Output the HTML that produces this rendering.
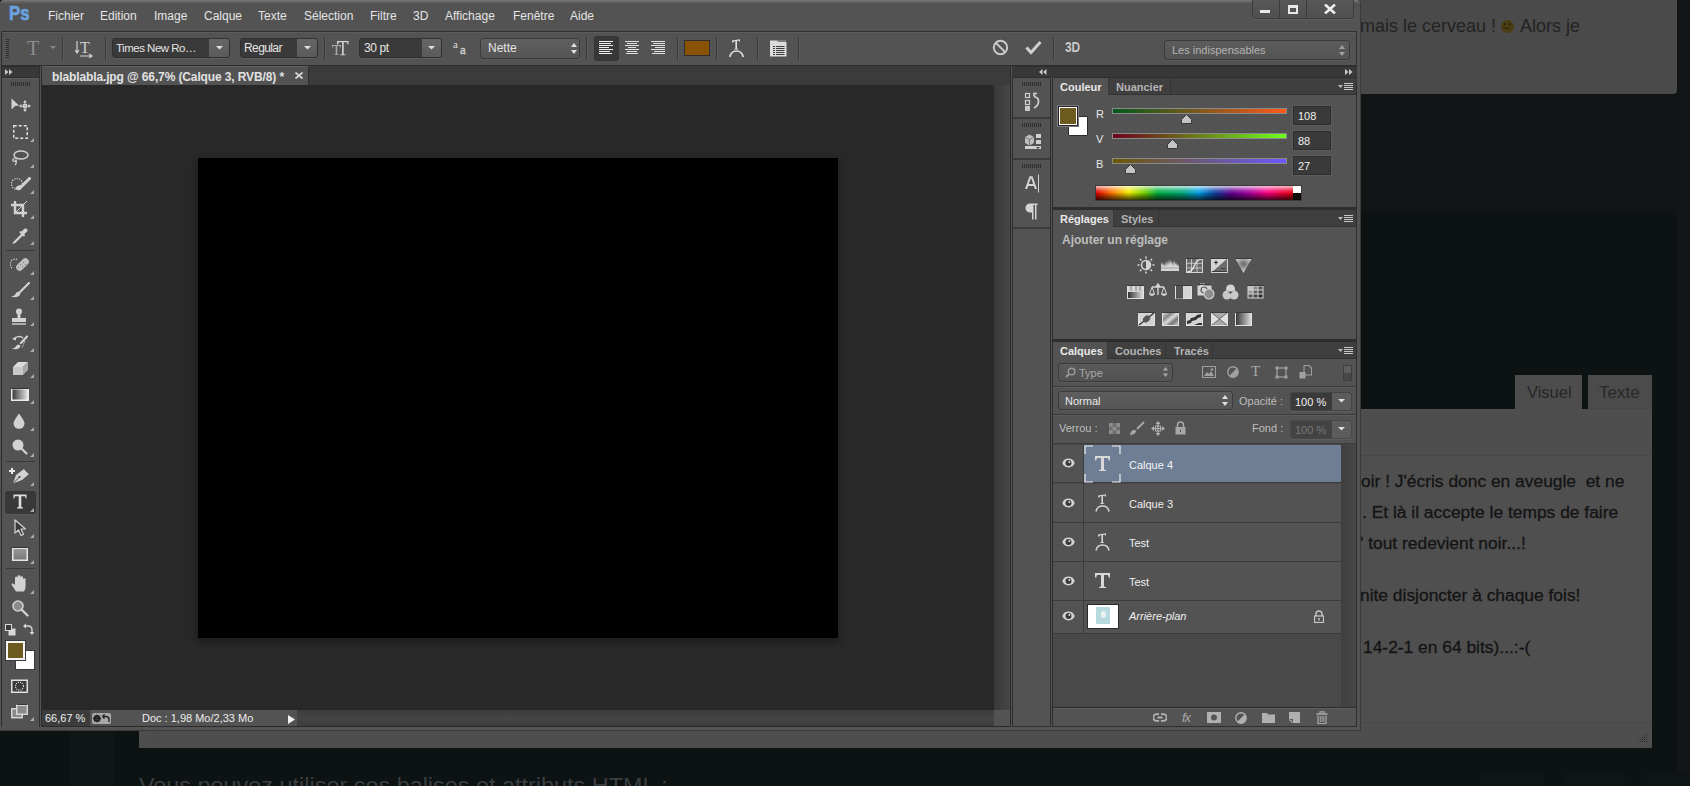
<!DOCTYPE html>
<html><head><meta charset="utf-8">
<style>
*{box-sizing:border-box;margin:0;padding:0}
html,body{width:1690px;height:786px;overflow:hidden;background:#0d1213;font-family:"Liberation Sans",sans-serif;}
.a{position:absolute}
#web{position:absolute;left:0;top:0;width:1690px;height:786px}
#ps{position:absolute;left:0;top:0;width:1361px;height:731px;background:#535353;border-right:1px solid #3a3a3a;border-bottom:1px solid #3a3a3a;border-radius:4px 4px 0 0;overflow:hidden}
.t{position:absolute;white-space:nowrap;color:#e4e4e4;font-size:12px;line-height:14px}
.sep{position:absolute;width:1px;background:#3a3a3a;box-shadow:1px 0 0 #5c5c5c}
.fld{position:absolute;background:#3a3a3a;border:1px solid #303030;border-radius:3px;box-shadow:0 1px 0 #5e5e5e}
.dd{position:absolute;background:linear-gradient(#5f5f5f,#555);border:1px solid #3b3b3b;border-radius:3px;box-shadow:0 1px 0 #5a5a5a}
.tab{position:absolute;font-size:11px;font-weight:bold;color:#b4b4b4;line-height:16px}
</style></head><body>
<div id="web">
  <!-- background columns -->
  <div class="a" style="left:1361px;top:94px;width:316px;height:116px;background:#111516"></div>
    <div class="a" style="left:1677px;top:0;width:13px;height:786px;background:#121617"></div>
  <div class="a" style="left:70px;top:731px;width:44px;height:55px;background:#101516"></div>
  <!-- card -->
  <div class="a" style="left:1200px;top:0;width:477px;height:94px;background:#4a4a4a;border-radius:0 0 4px 0"></div>
  <!-- tabs -->
  <div class="a" style="left:1515px;top:375px;width:67px;height:34px;background:#4d4d4d"></div>
  <div class="a" style="left:1588px;top:375px;width:64px;height:34px;background:#4b4b4b;border-bottom:1px solid #474747"></div>
  <!-- editor -->
  <div class="a" style="left:139px;top:409px;width:1513px;height:339px;background:#4e4e4e"></div>

  <!-- card text -->
  <div class="a" style="left:1360px;top:14px;font-size:18px;line-height:24px;color:#232323;white-space:nowrap">mais le cerveau !</div>
  <div class="a" style="left:1501px;top:20px;width:13px;height:13px;border-radius:50%;background:#4b3c12"></div>
  <div class="a" style="left:1504px;top:23px;width:2px;height:2px;background:#2a2410"></div>
  <div class="a" style="left:1509px;top:23px;width:2px;height:2px;background:#2a2410"></div>
  <div class="a" style="left:1503px;top:25px;width:7px;height:4px;border-bottom:1.5px solid #2a2410;border-radius:0 0 4px 4px"></div>
  <div class="a" style="left:1520px;top:14px;font-size:18px;line-height:24px;color:#232323;white-space:nowrap">Alors je</div>
  <!-- tab labels -->
  <div class="a" style="left:1527px;top:383px;font-size:17px;line-height:20px;color:#272727;white-space:nowrap;transform:scaleX(0.97);transform-origin:0 0">Visuel</div>
  <div class="a" style="left:1599px;top:383px;font-size:17px;line-height:20px;color:#292929;white-space:nowrap">Texte</div>
  <!-- editor structure -->
  <div class="a" style="left:139px;top:455px;width:1513px;height:1px;background:#474747"></div>
  <div class="a" style="left:139px;top:456px;width:1513px;height:266px;background:#4f4f4f"></div>
  <div class="a" style="left:139px;top:722px;width:1513px;height:1px;background:#474747"></div>
  <svg class="a" style="left:1637px;top:732px" width="11" height="11"><path d="M9 1h1v1h-1zM7 3h1v1h-1zM9 3h1v1h-1zM5 5h1v1h-1zM7 5h1v1h-1zM9 5h1v1h-1zM3 7h1v1h-1zM5 7h1v1h-1zM7 7h1v1h-1zM9 7h1v1h-1zM1 9h1v1h-1zM3 9h1v1h-1zM5 9h1v1h-1zM7 9h1v1h-1zM9 9h1v1h-1z" fill="#2e2e2e"/></svg>
  <!-- editor text -->
  <div class="a" style="left:1361px;top:471px;font-size:17.4px;line-height:20px;color:#141414;-webkit-text-stroke:0.3px #141414;white-space:pre">oir ! J'écris donc en aveugle  et ne</div>
  <div class="a" style="left:1362px;top:502px;font-size:17.4px;line-height:20px;color:#141414;-webkit-text-stroke:0.3px #141414;white-space:pre">. Et là il accepte le temps de faire</div>
  <div class="a" style="left:1360px;top:533px;font-size:17.4px;line-height:20px;color:#141414;-webkit-text-stroke:0.3px #141414;white-space:pre">' tout redevient noir...!</div>
  <div class="a" style="left:1360px;top:585px;font-size:17.4px;line-height:20px;color:#141414;-webkit-text-stroke:0.3px #141414;white-space:pre">nite disjoncter à chaque fois!</div>
  <div class="a" style="left:1363px;top:637px;font-size:17.4px;line-height:20px;color:#141414;-webkit-text-stroke:0.3px #141414;white-space:pre">14-2-1 en 64 bits)...:-(</div>
  <!-- bottom -->
  <div class="a" style="left:152px;top:727px;font-size:16px;line-height:18px;color:#4a4a4a">p</div>
  <div class="a" style="left:139px;top:773px;font-size:22px;line-height:26px;color:#3a3f42;white-space:nowrap;transform:scaleX(1.064);transform-origin:0 0">Vous pouvez utiliser ces balises et attributs HTML :</div>
  <div class="a" style="left:1480px;top:773px;width:64px;height:13px;background:#0f1416;border-radius:3px 3px 0 0"></div>
  <div class="a" style="left:1562px;top:773px;width:63px;height:13px;background:#0f1416;border-radius:3px 3px 0 0"></div>
  <div class="a" style="left:1641px;top:773px;width:49px;height:13px;background:#0f1416;border-radius:3px 3px 0 0"></div>
</div>

<div id="ps">

  <!-- top highlight -->
  <div class="a" style="left:0;top:0;width:1361px;height:1px;background:#767676"></div>
  <div class="a" style="left:0;top:1px;width:1361px;height:2px;background:#636363"></div>
  <!-- Ps logo -->
  <div class="t" style="left:9px;top:2px;font-size:21px;line-height:21px;font-weight:bold;color:#6aa2de;-webkit-text-stroke:0.7px #6aa2de;transform:scaleX(0.8);transform-origin:0 0">Ps</div>
  <div class="t" style="left:48px;top:9px">Fichier</div>
  <div class="t" style="left:100px;top:9px">Edition</div>
  <div class="t" style="left:154px;top:9px">Image</div>
  <div class="t" style="left:204px;top:9px">Calque</div>
  <div class="t" style="left:258px;top:9px">Texte</div>
  <div class="t" style="left:304px;top:9px">Sélection</div>
  <div class="t" style="left:370px;top:9px">Filtre</div>
  <div class="t" style="left:413px;top:9px">3D</div>
  <div class="t" style="left:445px;top:9px">Affichage</div>
  <div class="t" style="left:513px;top:9px">Fenêtre</div>
  <div class="t" style="left:570px;top:9px">Aide</div>
  <!-- window buttons -->
  <div class="a" style="left:1252px;top:-3px;width:102px;height:22px;border:1px solid #3c3c3c;border-radius:0 0 4px 4px;background:linear-gradient(#585858,#505050);box-shadow:0 1px 0 #5e5e5e"></div>
  <div class="a" style="left:1279px;top:0;width:1px;height:18px;background:#3c3c3c"></div>
  <div class="a" style="left:1306px;top:0;width:1px;height:18px;background:#3c3c3c"></div>
  <div class="a" style="left:1260px;top:10px;width:10px;height:3px;background:#e8e8e8"></div>
  <div class="a" style="left:1288px;top:5px;width:10px;height:9px;border:2px solid #e8e8e8;border-top-width:3px"></div>
  <svg class="a" style="left:1324px;top:4px" width="12" height="10" viewBox="0 0 12 10"><path d="M1 0.5 L11 9.5 M11 0.5 L1 9.5" stroke="#ececec" stroke-width="2.6"/></svg>
  <!-- options bar -->
  <div class="a" style="left:1px;top:31px;width:1356px;height:35px;background:#535353;border:1px solid #2e2e2e;border-right-color:#333"></div>
  <div class="a" style="left:2px;top:32px;width:1354px;height:1px;background:#5c5c5c"></div>

  <!-- options content -->
  <div class="a" style="left:6px;top:39px;width:3px;height:20px;background:repeating-linear-gradient(#2e2e2e 0 1px,transparent 1px 2px)"></div>
  <div class="t" style="left:27px;top:38px;font-family:'Liberation Serif';font-size:20px;line-height:20px;color:#8e8e8e">T</div>
  <svg class="a" style="left:50px;top:46px" width="6" height="4"><path d="M0 0H6L3 3z" fill="#8a8a8a"/></svg>
  <div class="sep" style="left:62px;top:37px;height:23px"></div>
  <svg class="a" style="left:75px;top:39px" width="19" height="19" viewBox="0 0 19 19"><text x="5" y="14" font-family="Liberation Serif" font-size="16" fill="#d0d0d0">T</text><path d="M2 2V13M0 11L2 14L4 11" stroke="#d0d0d0" stroke-width="1.2" fill="none"/><path d="M5 17H17M14 15L17 17L14 19" stroke="#d0d0d0" stroke-width="1.2" fill="none"/></svg>
  <div class="sep" style="left:105px;top:37px;height:23px"></div>
  <div class="fld" style="left:112px;top:38px;width:118px;height:20px"></div>
  <div class="a" style="left:209px;top:39px;width:20px;height:18px;background:linear-gradient(#666,#5a5a5a);border-radius:0 2px 2px 0"></div>
  <svg class="a" style="left:216px;top:46px" width="7" height="4"><path d="M0 0H7L3.5 3.5z" fill="#e0e0e0"/></svg>
  <div class="t" style="left:116px;top:41px;font-size:11.5px;letter-spacing:-0.5px">Times New Ro…</div>
  <div class="fld" style="left:240px;top:38px;width:78px;height:20px"></div>
  <div class="a" style="left:297px;top:39px;width:20px;height:18px;background:linear-gradient(#666,#5a5a5a);border-radius:0 2px 2px 0"></div>
  <svg class="a" style="left:304px;top:46px" width="7" height="4"><path d="M0 0H7L3.5 3.5z" fill="#e0e0e0"/></svg>
  <div class="t" style="left:244px;top:41px;font-size:12px;letter-spacing:-0.6px">Regular</div>
  <div class="sep" style="left:324px;top:37px;height:23px"></div>
  <svg class="a" style="left:331px;top:40px" width="18" height="16" viewBox="0 0 18 16"><path d="M1 5H10V7.5H9.3L8.8 6H6.3V14.3L7.5 14.6V15H3.5V14.6L4.7 14.3V6H2.2L1.7 7.5H1z" fill="#a8a8a8"/><path d="M6 1H17.5V4.5H16.7L16 2.3H12.7V14.2L14.5 14.6V15.2H9.3V14.6L11.1 14.2V2.3H7.8L7 4.5H6z" fill="#d4d4d4"/></svg>
  <div class="fld" style="left:359px;top:38px;width:83px;height:20px"></div>
  <div class="a" style="left:422px;top:39px;width:19px;height:18px;background:linear-gradient(#666,#5a5a5a);border-radius:0 2px 2px 0"></div>
  <svg class="a" style="left:428px;top:46px" width="7" height="4"><path d="M0 0H7L3.5 3.5z" fill="#e0e0e0"/></svg>
  <div class="t" style="left:364px;top:41px;font-size:12px;letter-spacing:-0.4px">30 pt</div>
  <svg class="a" style="left:453px;top:40px" width="16" height="15" viewBox="0 0 16 15"><text x="0" y="8" font-family="Liberation Serif" font-size="11" fill="#d8d8d8">a</text><text x="7" y="13.5" font-family="Liberation Serif" font-size="13" fill="#d0d0d0" stroke="#d0d0d0" stroke-width="0.4">a</text></svg>
  <div class="dd" style="left:480px;top:38px;width:100px;height:21px"></div>
  <div class="t" style="left:488px;top:41px;font-size:12px">Nette</div>
  <svg class="a" style="left:571px;top:43px" width="6" height="11"><path d="M0 4L3 0L6 4zM0 7H6L3 11z" fill="#e0e0e0"/></svg>
  <div class="sep" style="left:586px;top:37px;height:23px"></div>
  <div class="a" style="left:594px;top:36px;width:25px;height:25px;background:#383838;border-radius:3px;border:1px solid #343434"></div>
  <svg class="a" style="left:598px;top:40px" width="16" height="15"><path d="M1 1.5H15M1 3.5H13M1 5.5H15M1 7.5H11M1 9.5H15M1 11.5H12M1 13.5H14" stroke="#f0f0f0" stroke-width="1"/></svg>
  <svg class="a" style="left:624px;top:40px" width="16" height="15"><path d="M1 1.5H15M3 3.5H13M1 5.5H15M4 7.5H12M1 9.5H15M3 11.5H13M2 13.5H14" stroke="#e0e0e0" stroke-width="1"/></svg>
  <svg class="a" style="left:650px;top:40px" width="16" height="15"><path d="M1 1.5H15M3 3.5H15M1 5.5H15M5 7.5H15M1 9.5H15M4 11.5H15M2 13.5H15" stroke="#e0e0e0" stroke-width="1"/></svg>
  <div class="sep" style="left:677px;top:37px;height:23px"></div>
  <div class="a" style="left:684px;top:40px;width:26px;height:16px;background:#8a5200;border:1px solid #2f2f2f"></div>
  <div class="sep" style="left:716px;top:37px;height:23px"></div>
  <svg class="a" style="left:729px;top:38px" width="15" height="20" viewBox="0 0 15 20"><path d="M3 2.5L11 1.2V3.5H10L9.6 2.6L8 2.9V10.5L9.2 11V11.6H5.2V11L6.4 10.4V3.1L4.8 3.4L4.2 4.6H3z" fill="#e0e0e0"/><path d="M0.8 19Q2 13 7.5 13Q13 13 14.2 19" stroke="#e0e0e0" stroke-width="1.7" fill="none"/></svg>
  <div class="sep" style="left:757px;top:37px;height:23px"></div>
  <svg class="a" style="left:770px;top:40px" width="17" height="17" viewBox="0 0 17 17"><path d="M0 0.5H7L8.5 2H16.5V16.5H0z" fill="#dcdcdc"/><path d="M7.5 1H16" stroke="#9a9a9a" stroke-width="1.2"/><path d="M3 6.5H14.5M3 8.5H14.5M3 10.5H14.5M3 12.5H14.5M3 14.5H14.5" stroke="#3c3c3c" stroke-width="1"/><path d="M5.5 6V15" stroke="#dcdcdc" stroke-width="1"/></svg>
  <div class="sep" style="left:798px;top:37px;height:23px"></div>

  <!-- ===== LEFT TOOLS PANEL ===== -->
  <div class="a" style="left:1px;top:66px;width:39px;height:661px;background:#535353;border:1px solid #2e2e2e;border-bottom:0"></div>
  <div class="a" style="left:2px;top:67px;width:37px;height:10px;background:#383838"></div>
  <div class="a" style="left:2px;top:77px;width:37px;height:1px;background:#2e2e2e"></div>
  <div class="a" style="left:2px;top:78px;width:37px;height:1px;background:#5e5e5e"></div>
  <svg class="a" style="left:5px;top:69px" width="8" height="6"><path d="M0 0L3.5 3L0 6zM4 0L7.5 3L4 6z" fill="#c8c8c8"/></svg>
  <div class="a" style="left:11px;top:82px;width:19px;height:4px;background:repeating-linear-gradient(90deg,#2f2f2f 0 1px,transparent 1px 2px)"></div>
  <svg class="a" style="left:11px;top:98px" width="20" height="15" viewBox="0 0 20 15"><path d="M0.5 0.5L8 7.5L4 8L0.5 11.5z" fill="#d2d2d2"/><path d="M14 3V13M9 8H19" stroke="#d2d2d2" stroke-width="1.2"/><path d="M14 2L12 4.5H16zM14 14L12 11.5H16zM8 8L10.5 6V10zM20 8L17.5 6V10z" fill="#d2d2d2"/><rect x="12.5" y="6.5" width="3" height="3" fill="none" stroke="#d2d2d2"/></svg>
  <svg class="a" style="left:13px;top:125px" width="15" height="14" viewBox="0 0 15 14"><rect x="0.75" y="0.75" width="13.5" height="12.5" fill="none" stroke="#e0e0e0" stroke-width="1.5" stroke-dasharray="3 2"/></svg>
  <svg class="a" style="left:30px;top:138px" width="4" height="4"><path d="M4 0V4H0z" fill="#aaa"/></svg>
  <svg class="a" style="left:11px;top:150px" width="18" height="16" viewBox="0 0 18 16"><ellipse cx="10" cy="5" rx="7" ry="4" fill="none" stroke="#d2d2d2" stroke-width="1.5"/><path d="M4 8Q1 9 2 11Q4 12 5 10Q6 13 4 15" stroke="#d2d2d2" stroke-width="1.3" fill="none"/></svg>
  <svg class="a" style="left:30px;top:164px" width="4" height="4"><path d="M4 0V4H0z" fill="#aaa"/></svg>
  <svg class="a" style="left:11px;top:177px" width="20" height="15" viewBox="0 0 20 15"><circle cx="6" cy="7" r="5.5" fill="none" stroke="#e0e0e0" stroke-width="1.2" stroke-dasharray="1.2 1.3"/><path d="M18.5 1.5L11 9" stroke="#d2d2d2" stroke-width="3" stroke-linecap="round"/><path d="M4 11Q8 7 11 8.5Q12 11 9 13Q6 14 4 11z" fill="#d2d2d2"/></svg>
  <svg class="a" style="left:30px;top:190px" width="4" height="4"><path d="M4 0V4H0z" fill="#aaa"/></svg>
  <svg class="a" style="left:11px;top:201px" width="17" height="16" viewBox="0 0 17 16"><path d="M4 0V12H16M0 4H12V16" stroke="#d2d2d2" stroke-width="2.4" fill="none"/><path d="M4.5 11.5L16 0" stroke="#d2d2d2" stroke-width="1"/></svg>
  <svg class="a" style="left:30px;top:215px" width="4" height="4"><path d="M4 0V4H0z" fill="#aaa"/></svg>
  <svg class="a" style="left:12px;top:227px" width="17" height="17" viewBox="0 0 17 17"><path d="M13.5 1.5Q16 2 15.5 4L12 7.5L9.5 5Q12 1 13.5 1.5z" fill="#d2d2d2"/><path d="M8 4.5L12.5 9" stroke="#d2d2d2" stroke-width="2"/><path d="M10 7L2 15L1.5 16L3 15.5L11 7.5" stroke="#d2d2d2" stroke-width="1.2" fill="none"/></svg>
  <svg class="a" style="left:30px;top:241px" width="4" height="4"><path d="M4 0V4H0z" fill="#aaa"/></svg>
  <div class="a" style="left:6px;top:250px;width:29px;height:1px;background:#3a3a3a"></div>
  <svg class="a" style="left:10px;top:256px" width="20" height="17" viewBox="0 0 20 17"><path d="M7 3.5A5 5 0 0 0 2 12" stroke="#e0e0e0" stroke-width="1.2" stroke-dasharray="1.2 1.3" fill="none"/><rect x="5" y="5" width="15" height="7" rx="3.5" transform="rotate(-45 12.5 8.5)" fill="#c0c0c0"/><path d="M10 8h1v1h-1zM12 10h1v1h-1zM13 6h1v1h-1zM15 8h1v1h-1zM8 11h1v1h-1z" fill="#777"/></svg>
  <svg class="a" style="left:30px;top:271px" width="4" height="4"><path d="M4 0V4H0z" fill="#aaa"/></svg>
  <svg class="a" style="left:10px;top:282px" width="20" height="16" viewBox="0 0 20 16"><path d="M19 1L10 10" stroke="#d2d2d2" stroke-width="2.2" stroke-linecap="round"/><path d="M1 14.5Q5 14 6 11Q8 9 10 10.5Q11 13 8 14.5Q5 16 1 14.5z" fill="#d2d2d2"/></svg>
  <svg class="a" style="left:30px;top:296px" width="4" height="4"><path d="M4 0V4H0z" fill="#aaa"/></svg>
  <svg class="a" style="left:11px;top:308px" width="16" height="18" viewBox="0 0 16 18"><circle cx="8" cy="3.5" r="3" fill="#d2d2d2"/><path d="M6.5 5H9.5V10H6.5z" fill="#d2d2d2"/><path d="M1 10H15V14H1z" fill="#d2d2d2"/><path d="M1 16H15" stroke="#d2d2d2" stroke-width="1.4"/></svg>
  <svg class="a" style="left:30px;top:322px" width="4" height="4"><path d="M4 0V4H0z" fill="#aaa"/></svg>
  <svg class="a" style="left:11px;top:335px" width="18" height="16" viewBox="0 0 18 16"><path d="M16 1.5L10 8" stroke="#d2d2d2" stroke-width="2.2" stroke-linecap="round"/><path d="M0.5 13.5Q4 13.5 5 11Q7 8.5 9 10Q10 12.5 7 13.8Q4 15 0.5 13.5z" fill="#d2d2d2"/><path d="M12 3Q9 0 4 3" stroke="#d2d2d2" stroke-width="1.4" fill="none"/><path d="M1 4L5 1.5L5 5.5z" fill="#d2d2d2"/><path d="M14 6L11 13" stroke="#eee" stroke-width="1" stroke-dasharray="1 1"/></svg>
  <svg class="a" style="left:30px;top:348px" width="4" height="4"><path d="M4 0V4H0z" fill="#aaa"/></svg>
  <svg class="a" style="left:12px;top:361px" width="17" height="15" viewBox="0 0 17 15"><path d="M6 1H16L11 6H1z" fill="#dcdcdc"/><path d="M1 6H11V14H1z" fill="#c8c8c8"/><path d="M11 6L16 1V9L11 14z" fill="#a8a8a8"/></svg>
  <svg class="a" style="left:30px;top:374px" width="4" height="4"><path d="M4 0V4H0z" fill="#aaa"/></svg>
  <svg class="a" style="left:11px;top:388px" width="18" height="13" viewBox="0 0 18 13"><defs><linearGradient id="tg1" x1="0" x2="1"><stop offset="0" stop-color="#333"/><stop offset="1" stop-color="#eaeaea"/></linearGradient></defs><rect x="0.75" y="0.75" width="16.5" height="11.5" fill="url(#tg1)" stroke="#eaeaea" stroke-width="1.5"/><path d="M0 0.5H18" stroke="#333"/></svg>
  <svg class="a" style="left:30px;top:400px" width="4" height="4"><path d="M4 0V4H0z" fill="#aaa"/></svg>
  <svg class="a" style="left:13px;top:413px" width="12" height="16" viewBox="0 0 12 16"><path d="M6 0.5Q11.5 8 11.5 10.5A5.5 5.2 0 0 1 0.5 10.5Q0.5 8 6 0.5z" fill="#d2d2d2"/></svg>
  <svg class="a" style="left:30px;top:427px" width="4" height="4"><path d="M4 0V4H0z" fill="#aaa"/></svg>
  <svg class="a" style="left:12px;top:439px" width="16" height="16" viewBox="0 0 16 16"><circle cx="6" cy="6" r="5.5" fill="#d2d2d2"/><path d="M9 9L14.5 14.5" stroke="#d2d2d2" stroke-width="2.2" stroke-linecap="round"/></svg>
  <svg class="a" style="left:30px;top:453px" width="4" height="4"><path d="M4 0V4H0z" fill="#aaa"/></svg>
  <div class="a" style="left:6px;top:461px;width:29px;height:1px;background:#3a3a3a"></div>
  <svg class="a" style="left:8px;top:467px" width="23" height="17" viewBox="0 0 23 17"><path d="M1 4H7M4 1V7" stroke="#e8e8e8" stroke-width="2"/><path d="M16 2L21 7L14 13L5 16.5L8 8z" fill="#d2d2d2"/><path d="M16.5 2.5L20.5 6.5" stroke="#555" stroke-width="1"/><path d="M5 16.5L11 10.5" stroke="#333" stroke-width="0.9"/><circle cx="11.5" cy="10" r="1" fill="#333"/></svg>
  <svg class="a" style="left:30px;top:482px" width="4" height="4"><path d="M4 0V4H0z" fill="#aaa"/></svg>
  <div class="a" style="left:5px;top:491px;width:31px;height:23px;background:#383838;border-radius:3px;box-shadow:0 1px 0 #5a5a5a"></div>
  <svg class="a" style="left:13px;top:494px" width="14" height="15" viewBox="0 0 14 15"><path d="M0.5 0.5H13.5V4.5H12.6L12 2.2H8.3V13L10 13.6V14.5H4V13.6L5.7 13V2.2H2L1.4 4.5H0.5z" fill="#dedede"/></svg>
  <svg class="a" style="left:30px;top:508px" width="4" height="4"><path d="M4 0V4H0z" fill="#aaa"/></svg>
  <svg class="a" style="left:14px;top:519px" width="12" height="17" viewBox="0 0 12 17"><path d="M1 1V14L4.5 11L7 16.5L9.5 15.5L7 10H11.5z" fill="#3a3a3a" stroke="#d2d2d2" stroke-width="1.2" stroke-linejoin="round"/></svg>
  <svg class="a" style="left:30px;top:534px" width="4" height="4"><path d="M4 0V4H0z" fill="#aaa"/></svg>
  <svg class="a" style="left:12px;top:547px" width="16" height="14" viewBox="0 0 16 14"><defs><linearGradient id="tg2" x1="0" y1="0" x2="0" y2="1"><stop offset="0" stop-color="#9a9a9a"/><stop offset="1" stop-color="#777"/></linearGradient></defs><rect x="0.75" y="1.25" width="14.5" height="12" fill="url(#tg2)" stroke="#e4e4e4" stroke-width="1.5"/><path d="M0 0.5H16" stroke="#333"/></svg>
  <svg class="a" style="left:30px;top:560px" width="4" height="4"><path d="M4 0V4H0z" fill="#aaa"/></svg>
  <div class="a" style="left:6px;top:568px;width:29px;height:1px;background:#3a3a3a"></div>
  <svg class="a" style="left:11px;top:575px" width="17" height="17" viewBox="0 0 17 17"><path d="M5 16.5L0.5 9.5Q0.5 8 2 8.5L4 10V3Q4 1.5 5.3 1.5Q6.6 1.5 6.6 3V7.5V1.5Q6.6 0.3 8 0.3Q9.4 0.3 9.4 1.5V7.5V2.5Q9.4 1.2 10.7 1.2Q12 1.2 12 2.5V8V4.5Q12 3.3 13.3 3.3Q14.6 3.3 14.6 4.5V11Q14.6 14 13 16.5z" fill="#d2d2d2"/></svg>
  <svg class="a" style="left:30px;top:590px" width="4" height="4"><path d="M4 0V4H0z" fill="#aaa"/></svg>
  <svg class="a" style="left:12px;top:600px" width="17" height="17" viewBox="0 0 17 17"><circle cx="6" cy="6" r="5" fill="#8a8a8a" stroke="#d0d0d0" stroke-width="1.6"/><path d="M9.5 9.5L15.5 15.5" stroke="#d2d2d2" stroke-width="2.4" stroke-linecap="round"/></svg>
  <svg class="a" style="left:5px;top:624px" width="11" height="12" viewBox="0 0 11 12"><rect x="3.5" y="4.5" width="7" height="7" fill="#d8d8d8"/><rect x="0.5" y="0.5" width="6" height="6" fill="#3a3a3a" stroke="#d8d8d8" stroke-width="1"/></svg>
  <svg class="a" style="left:23px;top:623px" width="11" height="12" viewBox="0 0 11 12"><path d="M2 3H5Q9 3 9 7V10" stroke="#d8d8d8" stroke-width="1.3" fill="none"/><path d="M0 3L3 0.5V5.5zM9 12L6.5 9H11.5z" fill="#d8d8d8"/></svg>
  <div class="a" style="left:15px;top:650px;width:20px;height:20px;background:#fff;border:1px solid #3a3a3a"></div>
  <div class="a" style="left:6px;top:641px;width:19px;height:19px;background:#6d5a1e;border:2px solid #f4f4f4;outline:1px solid #3a3a3a"></div>
  <svg class="a" style="left:11px;top:679px" width="17" height="14" viewBox="0 0 17 14"><rect x="0.75" y="1.25" width="15.5" height="12" fill="#3a3a3a" stroke="#e0e0e0" stroke-width="1.5"/><circle cx="8.5" cy="7.2" r="4" fill="none" stroke="#f0f0f0" stroke-width="1.1" stroke-dasharray="1 1.1"/></svg>
  <svg class="a" style="left:11px;top:704px" width="17" height="15" viewBox="0 0 17 15"><rect x="0.75" y="4.75" width="10.5" height="9" fill="#8a8a8a" stroke="#e0e0e0" stroke-width="1.3"/><rect x="5.75" y="1.25" width="10.5" height="9" fill="#8a8a8a" stroke="#e0e0e0" stroke-width="1.3"/><path d="M6 0.5H16" stroke="#333"/></svg>
  <svg class="a" style="left:30px;top:717px" width="4" height="4"><path d="M4 0V4H0z" fill="#aaa"/></svg>
  <!-- ===== DOCUMENT AREA ===== -->
  <div class="a" style="left:41px;top:66px;width:970px;height:661px;background:#282828;border:1px solid #2b2b2b"></div>
  <div class="a" style="left:42px;top:66px;width:968px;height:19px;background:#3b3b3b"></div>
  <div class="a" style="left:42px;top:66px;width:267px;height:19px;background:#535353;border-top:1px solid #5f5f5f;border-right:1px solid #2f2f2f"></div>
  <div class="t" style="left:52px;top:70px;font-weight:bold;color:#e2e2e2;letter-spacing:-0.12px">blablabla.jpg @ 66,7% (Calque 3, RVB/8) *</div>
  <svg class="a" style="left:295px;top:72px" width="8" height="7"><path d="M0.5 0.5L7.5 6.5M7.5 0.5L0.5 6.5" stroke="#dcdcdc" stroke-width="1.6"/></svg>
  <!-- canvas shadow + canvas -->
  <div class="a" style="left:198px;top:158px;width:640px;height:480px;background:#000;box-shadow:0 3px 6px 1px rgba(0,0,0,0.3)"></div>
  <!-- vertical scrollbar -->
  <div class="a" style="left:994px;top:85px;width:16px;height:641px;background:linear-gradient(90deg,#393939,#464646)"></div>
  <!-- status bar -->
  <div class="a" style="left:42px;top:710px;width:952px;height:16px;background:linear-gradient(#3b3b3b,#454545 50%,#3d3d3d)"></div>
  <div class="a" style="left:42px;top:710px;width:255px;height:16px;background:#535353"></div>
  <div class="a" style="left:42px;top:710px;width:48px;height:16px;background:#3c3c3c"></div>
  <div class="a" style="left:994px;top:710px;width:16px;height:16px;background:#535353"></div>
  <div class="t" style="left:45px;top:711px;font-size:11px;color:#f0f0f0">66,67 %</div>
  <svg class="a" style="left:92px;top:713px" width="19" height="11" viewBox="0 0 19 11"><rect x="0" y="0" width="19" height="11" rx="2" fill="#a8a8a8"/><circle cx="5" cy="5.5" r="2.6" fill="none" stroke="#222" stroke-width="2"/><path d="M5 1.5V9.5M1 5.5H9M2.2 2.7L7.8 8.3M7.8 2.7L2.2 8.3" stroke="#222" stroke-width="1"/><path d="M10.5 3.5H14M10.5 3.5L12.5 1.5M10.5 3.5L12.5 5.5M14 3.5Q17 3.5 17 6.5V9" stroke="#222" stroke-width="1.4" fill="none"/></svg>
  <div class="t" style="left:142px;top:711px;font-size:11px;color:#ececec">Doc : 1,98 Mo/2,33 Mo</div>
  <svg class="a" style="left:288px;top:715px" width="7" height="9"><path d="M0 0L7 4.5L0 9z" fill="#f0f0f0"/></svg>
  <!-- ===== DOCK ICON COLUMN ===== -->
  <div class="a" style="left:1012px;top:66px;width:345px;height:11px;background:#383838;border-top:1px solid #2e2e2e"></div>
  <svg class="a" style="left:1039px;top:69px" width="8" height="6"><path d="M3.5 0L0 3L3.5 6zM7.5 0L4 3L7.5 6z" fill="#c8c8c8"/></svg>
  <svg class="a" style="left:1345px;top:69px" width="8" height="6"><path d="M0 0L3.5 3L0 6zM4 0L7.5 3L4 6z" fill="#c8c8c8"/></svg>
  <div class="a" style="left:1012px;top:77px;width:39px;height:650px;background:#535353;border:1px solid #2e2e2e"></div>
  <div class="a" style="left:1013px;top:117px;width:37px;height:2px;background:#3a3a3a"></div>
  <div class="a" style="left:1013px;top:158px;width:37px;height:2px;background:#3a3a3a"></div>
  <div class="a" style="left:1013px;top:227px;width:37px;height:2px;background:#3a3a3a"></div>
  <div class="a" style="left:1022px;top:82px;width:19px;height:4px;background:repeating-linear-gradient(90deg,#2f2f2f 0 1px,transparent 1px 2px)"></div>
  <div class="a" style="left:1022px;top:123px;width:19px;height:4px;background:repeating-linear-gradient(90deg,#2f2f2f 0 1px,transparent 1px 2px)"></div>
  <div class="a" style="left:1022px;top:164px;width:19px;height:4px;background:repeating-linear-gradient(90deg,#2f2f2f 0 1px,transparent 1px 2px)"></div>

  <!-- dock icons -->
  <svg class="a" style="left:1024px;top:92px" width="18" height="19" viewBox="0 0 18 19"><rect x="1.5" y="1.5" width="4" height="4" fill="none" stroke="#d0d0d0" stroke-width="1.2"/><rect x="1.5" y="8.5" width="4" height="4" fill="none" stroke="#d0d0d0" stroke-width="1.2"/><rect x="1" y="14" width="5" height="5" fill="#c8c8c8"/><path d="M9 1.5H13" stroke="#d0d0d0" stroke-width="1.6"/><path d="M9.5 2.5L11 5Q15 6 14.5 10Q14 14 10 16" stroke="#d0d0d0" stroke-width="1.8" fill="none"/></svg>
  <svg class="a" style="left:1024px;top:133px" width="19" height="17" viewBox="0 0 19 17"><path d="M1 4L5.5 1.5L10 4V10L5.5 12.5L1 10z" fill="#bdbdbd"/><path d="M1 4L5.5 6.5L10 4M5.5 6.5V12.5" stroke="#6a6a6a" stroke-width="0.8" fill="none"/><rect x="12" y="1" width="5" height="4" fill="#d0d0d0"/><rect x="12" y="7" width="5" height="4" fill="#d0d0d0"/><rect x="1" y="13" width="16" height="3" fill="#d0d0d0"/><path d="M12 14H16L14 16z" fill="#444"/></svg>
  <svg class="a" style="left:1024px;top:174px" width="16" height="19" viewBox="0 0 16 19"><path d="M1 15L5.5 2.2H8.5L13 15H10.8L9.8 12H4.2L3.2 15zM4.8 10H9.2L7 3.8z" fill="#d4d4d4"/><path d="M14.5 0.5V18.5" stroke="#d4d4d4" stroke-width="1"/></svg>
  <svg class="a" style="left:1025px;top:203px" width="13" height="17" viewBox="0 0 13 17"><path d="M5 0.5H12.5V2H11.5V16.5H10V2H8.5V16.5H7V9.5H5A4.5 4.5 0 0 1 5 0.5z" fill="#d4d4d4"/></svg>
  <!-- ===== PANELS ===== -->
  <div class="a" style="left:1052px;top:77px;width:305px;height:650px;background:#2e2e2e"></div>
  <!-- Couleur panel -->
  <div class="a" style="left:1053px;top:78px;width:303px;height:129px;background:#535353"></div>
  <div class="a" style="left:1053px;top:78px;width:303px;height:17px;background:#3f3f3f;border-bottom:1px solid #333"></div>
  <div class="a" style="left:1053px;top:78px;width:56px;height:17px;background:#535353;border-right:1px solid #3a3a3a"></div>
  <div class="a" style="left:1109px;top:78px;width:62px;height:16px;border-right:1px solid #343434"></div>
  <div class="tab" style="left:1060px;top:79px;color:#e8e8e8">Couleur</div>
  <div class="tab" style="left:1116px;top:79px">Nuancier</div>

  <!-- Couleur content -->
  <svg class="a" style="left:1338px;top:82px" width="16" height="9"><path d="M0 3H5L2.5 6z" fill="#c0c0c0"/><path d="M6 1.5H15M6 3.5H15M6 5.5H15M6 7.5H15" stroke="#c8c8c8" stroke-width="1"/></svg>
    <div class="a" style="left:1068px;top:116px;width:20px;height:20px;background:#fff;border:1px solid #2a2a2a;border-radius:1px"></div>
  <div class="a" style="left:1057px;top:105px;width:22px;height:22px;background:#6d5a1e;border:1px solid #7a7a7a;box-shadow:inset 0 0 0 1px #222,inset 0 0 0 2px #fff"></div>
  <div class="t" style="left:1096px;top:107px;font-size:11px;color:#e8e8e8">R</div>
  <div class="t" style="left:1096px;top:132px;font-size:11px;color:#e8e8e8">V</div>
  <div class="t" style="left:1096px;top:157px;font-size:11px;color:#e8e8e8">B</div>
  <div class="a" style="left:1112px;top:108px;width:175px;height:6px;background:linear-gradient(90deg,#005a1b,#ff581b);border:1px solid #8a8a8a"></div>
  <div class="a" style="left:1112px;top:133px;width:175px;height:6px;background:linear-gradient(90deg,#6c001b,#6cff1b);border:1px solid #8a8a8a"></div>
  <div class="a" style="left:1112px;top:158px;width:175px;height:6px;background:linear-gradient(90deg,#6c5800,#6c58ff);border:1px solid #8a8a8a"></div>
  <svg class="a" style="left:1181px;top:114px" width="11" height="10"><path d="M5.5 0.5L10.5 5.5V9.5H0.5V5.5z" fill="#c4c4c4" stroke="#3a3a3a" stroke-width="1"/></svg>
  <svg class="a" style="left:1167px;top:139px" width="11" height="10"><path d="M5.5 0.5L10.5 5.5V9.5H0.5V5.5z" fill="#c4c4c4" stroke="#3a3a3a" stroke-width="1"/></svg>
  <svg class="a" style="left:1125px;top:164px" width="11" height="10"><path d="M5.5 0.5L10.5 5.5V9.5H0.5V5.5z" fill="#c4c4c4" stroke="#3a3a3a" stroke-width="1"/></svg>
  <div class="a" style="left:1293px;top:106px;width:38px;height:19px;background:#3a3a3a;border:1px solid #2e2e2e;box-shadow:0 0 0 1px #5c5c5c"></div>
  <div class="a" style="left:1293px;top:131px;width:38px;height:19px;background:#3a3a3a;border:1px solid #2e2e2e;box-shadow:0 0 0 1px #5c5c5c"></div>
  <div class="a" style="left:1293px;top:156px;width:38px;height:19px;background:#3a3a3a;border:1px solid #2e2e2e;box-shadow:0 0 0 1px #5c5c5c"></div>
  <div class="t" style="left:1298px;top:109px;font-size:11px;color:#f0f0f0">108</div>
  <div class="t" style="left:1298px;top:134px;font-size:11px;color:#f0f0f0">88</div>
  <div class="t" style="left:1298px;top:159px;font-size:11px;color:#f0f0f0">27</div>
  <div class="a" style="left:1095px;top:185px;width:207px;height:16px;border:1px solid #3a3a3a;background:linear-gradient(90deg,#e00000 0%,#ff7a00 8%,#f5f000 16%,#70d000 24%,#00b040 30%,#00a878 42%,#00a0e8 50%,#1040a0 58%,#600090 66%,#a000a0 74%,#ff0080 84%,#f00030 92%,#e00000 100%)"></div>
  <div class="a" style="left:1096px;top:186px;width:197px;height:14px;background:linear-gradient(rgba(0,0,0,0) 45%,rgba(0,0,0,0.75) 100%),linear-gradient(rgba(255,255,255,0.75),rgba(255,255,255,0.15) 35%,rgba(255,255,255,0) 55%)"></div>
  <div class="a" style="left:1293px;top:186px;width:8px;height:7px;background:#fff"></div>
  <div class="a" style="left:1293px;top:193px;width:8px;height:7px;background:#100c08"></div>
  <!-- Reglages panel -->
  <div class="a" style="left:1053px;top:210px;width:303px;height:129px;background:#535353"></div>
  <div class="a" style="left:1053px;top:210px;width:303px;height:17px;background:#3f3f3f;border-bottom:1px solid #333"></div>
  <div class="a" style="left:1053px;top:210px;width:61px;height:17px;background:#535353;border-right:1px solid #3a3a3a"></div>
  <div class="a" style="left:1114px;top:210px;width:45px;height:16px;border-right:1px solid #343434"></div>
  <div class="tab" style="left:1060px;top:211px;color:#e8e8e8">Réglages</div>
  <div class="tab" style="left:1121px;top:211px">Styles</div>

  <!-- Reglages content -->
  <svg class="a" style="left:1338px;top:214px" width="16" height="9"><path d="M0 3H5L2.5 6z" fill="#c0c0c0"/><path d="M6 1.5H15M6 3.5H15M6 5.5H15M6 7.5H15" stroke="#c8c8c8" stroke-width="1"/></svg>
  <div class="t" style="left:1062px;top:233px;font-size:12px;font-weight:bold;color:#bdbdbd">Ajouter un réglage</div>
  <svg class="a" style="left:1137px;top:256px" width="19" height="19" viewBox="0 0 19 19"><circle cx="9" cy="9" r="4.5" fill="none" stroke="#d4d4d4" stroke-width="1.6"/><path d="M9 4.5A4.5 4.5 0 0 1 9 13.5z" fill="#d4d4d4"/><path d="M9 0.5V2.5M9 15.5V17.5M0.5 9H2.5M15.5 9H17.5M3 3L4.4 4.4M13.6 13.6L15 15M3 15L4.4 13.6M13.6 4.4L15 3" stroke="#d4d4d4" stroke-width="1.6"/></svg>
  <svg class="a" style="left:1161px;top:258px" width="19" height="13" viewBox="0 0 19 13"><path d="M0 13V7L1 4L2 8L3 5L4 9L5 3L6 8L7 2L8 7L9 1L10 6L11 3L12 8L13 2L14 7L15 4L16 8L17 6L18 9V13z" fill="#d4d4d4"/><path d="M0 10H18" stroke="#888" stroke-width="0.6"/></svg>
  <svg class="a" style="left:1186px;top:258px" width="17" height="15" viewBox="0 0 17 15"><rect x="0.5" y="0.5" width="16" height="14" fill="#6a6a6a" stroke="#d4d4d4"/><path d="M0 5.3H17M0 10H17M5.5 0V15M11 0V15" stroke="#d4d4d4" stroke-width="0.8"/><path d="M1 14Q6 14 8.5 7.5Q11 1 16 1" stroke="#eee" stroke-width="1.2" fill="none"/><path d="M0 0.5H17" stroke="#3a3a3a"/></svg>
  <svg class="a" style="left:1211px;top:258px" width="17" height="15" viewBox="0 0 17 15"><rect x="0" y="0" width="17" height="15" fill="#d4d4d4"/><path d="M0.5 14.5L16.5 0.5V14.5z" fill="#6a6a6a"/><rect x="0.5" y="0.5" width="16" height="14" fill="none" stroke="#d4d4d4"/><path d="M3 4.5H7M5 2.5V6.5M10 10.5H14" stroke="#3a3a3a" stroke-width="1.2"/><path d="M0 0.5H17M1 13.5H16" stroke="#3a3a3a"/></svg>
  <svg class="a" style="left:1235px;top:258px" width="17" height="15" viewBox="0 0 17 15"><defs><radialGradient id="vg" cx="0.5" cy="0.35" r="0.6"><stop offset="0" stop-color="#666"/><stop offset="1" stop-color="#d8d8d8"/></radialGradient></defs><path d="M0.5 1H16.5L8.5 15z" fill="url(#vg)"/><path d="M0.5 0.5H16.5" stroke="#3a3a3a"/></svg>
  <svg class="a" style="left:1127px;top:285px" width="17" height="14" viewBox="0 0 17 14"><defs><linearGradient id="hg" x1="0" x2="1"><stop offset="0" stop-color="#333"/><stop offset="1" stop-color="#ddd"/></linearGradient></defs><rect x="0.5" y="0.5" width="16" height="13" fill="#d4d4d4" stroke="#e0e0e0"/><rect x="1" y="7" width="15" height="6" fill="url(#hg)"/><path d="M4 1V6M9 1V6M13 1V6" stroke="#9a9a9a" stroke-width="1.5"/><path d="M0 0.5H17" stroke="#3a3a3a"/></svg>
  <svg class="a" style="left:1149px;top:283px" width="19" height="16" viewBox="0 0 19 16"><path d="M9 1V12M3 4H15M9 1L7 4H11z" stroke="#d4d4d4" stroke-width="1.4" fill="#d4d4d4"/><path d="M3 4L0.5 11H5.5zM15 4L12.5 11H17.5z" fill="none" stroke="#d4d4d4" stroke-width="1"/><path d="M0 11H6Q3 15 0 11zM12 11H18Q15 15 12 11z" fill="#d4d4d4"/></svg>
  <svg class="a" style="left:1175px;top:285px" width="17" height="14" viewBox="0 0 17 14"><rect x="0.5" y="0.5" width="16" height="13" fill="#d4d4d4" stroke="#e0e0e0"/><rect x="1" y="1" width="7" height="12" fill="#555"/><path d="M0 0.5H17M1 13H8" stroke="#3a3a3a"/></svg>
  <svg class="a" style="left:1197px;top:283px" width="18" height="17" viewBox="0 0 18 17"><rect x="0.5" y="2.5" width="14" height="10" fill="#d4d4d4"/><rect x="3" y="0.5" width="5" height="3" fill="#d4d4d4"/><circle cx="7" cy="7" r="3" fill="none" stroke="#555" stroke-width="1.2"/><circle cx="12" cy="11" r="5" fill="#8e8e8e" stroke="#cfcfcf" stroke-width="1.2"/><path d="M1 1.5H14" stroke="#3a3a3a"/></svg>
  <svg class="a" style="left:1222px;top:284px" width="17" height="16" viewBox="0 0 17 16"><circle cx="8.5" cy="5" r="4.5" fill="#d4d4d4"/><circle cx="5" cy="11" r="4.5" fill="#c8c8c8"/><circle cx="12" cy="11" r="4.5" fill="#c8c8c8"/><path d="M6 7.5L8.5 10L11 7.5z" fill="#555"/></svg>
  <svg class="a" style="left:1247px;top:285px" width="17" height="14" viewBox="0 0 17 14"><rect x="0.5" y="0.5" width="16" height="13" fill="#d4d4d4"/><rect x="1.5" y="1.5" width="4" height="3" fill="#bdbdbd"/><rect x="6.5" y="1.5" width="4" height="3" fill="#8a8a8a"/><rect x="11.5" y="1.5" width="4" height="3" fill="#555"/><rect x="1.5" y="5.5" width="4" height="3" fill="#9a9a9a"/><rect x="6.5" y="5.5" width="4" height="3" fill="#666"/><rect x="11.5" y="5.5" width="4" height="3" fill="#444"/><rect x="1.5" y="9.5" width="4" height="3" fill="#555"/><rect x="6.5" y="9.5" width="4" height="3" fill="#444"/><rect x="11.5" y="9.5" width="4" height="3" fill="#2a2a2a"/><path d="M0 0.5H17" stroke="#3a3a3a"/></svg>
  <svg class="a" style="left:1138px;top:312px" width="17" height="14" viewBox="0 0 17 14"><rect x="0.5" y="0.5" width="16" height="13" fill="#d4d4d4" stroke="#e0e0e0"/><path d="M1 13L16 1" stroke="#333" stroke-width="1.2"/><ellipse cx="8.5" cy="7" rx="4" ry="3" transform="rotate(-40 8.5 7)" fill="#555"/><path d="M0 0.5H17" stroke="#3a3a3a"/></svg>
  <svg class="a" style="left:1162px;top:312px" width="17" height="14" viewBox="0 0 17 14"><defs><linearGradient id="pg" x1="0" y1="0" x2="1" y2="1"><stop offset="0" stop-color="#ddd"/><stop offset="0.3" stop-color="#888"/><stop offset="0.5" stop-color="#ddd"/><stop offset="0.7" stop-color="#777"/><stop offset="1" stop-color="#ccc"/></linearGradient></defs><rect x="0.5" y="0.5" width="16" height="13" fill="url(#pg)" stroke="#e0e0e0"/><path d="M0 0.5H17" stroke="#3a3a3a"/></svg>
  <svg class="a" style="left:1186px;top:312px" width="17" height="14" viewBox="0 0 17 14"><rect x="0.5" y="0.5" width="16" height="13" fill="#d4d4d4" stroke="#e0e0e0"/><path d="M1 9L4 8L5 6L9 5L11 3L15 2V5L12 6L10 8L6 9L5 11L1 12z" fill="#333"/><path d="M8 13H16V11H13z" fill="#333"/><path d="M0 0.5H17" stroke="#3a3a3a"/></svg>
  <svg class="a" style="left:1211px;top:312px" width="17" height="14" viewBox="0 0 17 14"><rect x="0.5" y="0.5" width="16" height="13" fill="#aaa" stroke="#e0e0e0"/><path d="M1 1L8.5 7L1 13zM16 1L8.5 7L16 13z" fill="#e0e0e0"/><path d="M1 1L16 13M16 1L1 13" stroke="#555" stroke-width="0.8"/><path d="M0 0.5H17" stroke="#3a3a3a"/></svg>
  <svg class="a" style="left:1235px;top:312px" width="17" height="14" viewBox="0 0 17 14"><defs><linearGradient id="gg" x1="0" x2="1"><stop offset="0" stop-color="#333"/><stop offset="1" stop-color="#e0e0e0"/></linearGradient></defs><rect x="0.5" y="0.5" width="16" height="13" fill="url(#gg)" stroke="#e0e0e0"/><path d="M0 0.5H17" stroke="#3a3a3a"/></svg>
  <!-- Calques panel -->
  <div class="a" style="left:1053px;top:342px;width:303px;height:384px;background:#535353"></div>
  <div class="a" style="left:1053px;top:342px;width:303px;height:17px;background:#3f3f3f;border-bottom:1px solid #333"></div>
  <div class="a" style="left:1053px;top:342px;width:55px;height:17px;background:#535353;border-right:1px solid #3a3a3a"></div>
  <div class="a" style="left:1108px;top:342px;width:58px;height:16px;border-right:1px solid #343434"></div>
  <div class="a" style="left:1166px;top:342px;width:47px;height:16px;border-right:1px solid #343434"></div>
  <div class="tab" style="left:1060px;top:343px;color:#e8e8e8">Calques</div>
  <div class="tab" style="left:1115px;top:343px">Couches</div>
  <div class="tab" style="left:1174px;top:343px">Tracés</div>

  <!-- Calques content -->
  <svg class="a" style="left:1338px;top:346px" width="16" height="9"><path d="M0 3H5L2.5 6z" fill="#c0c0c0"/><path d="M6 1.5H15M6 3.5H15M6 5.5H15M6 7.5H15" stroke="#c8c8c8" stroke-width="1"/></svg>
  <div class="dd" style="left:1058px;top:363px;width:115px;height:19px;background:linear-gradient(#5a5a5a,#525252)"></div>
  <svg class="a" style="left:1065px;top:367px" width="11" height="11" viewBox="0 0 11 11"><circle cx="6.5" cy="4.5" r="3.3" fill="none" stroke="#9a9a9a" stroke-width="1.4"/><path d="M4 7L1 10" stroke="#9a9a9a" stroke-width="1.8"/></svg>
  <div class="t" style="left:1079px;top:366px;font-size:11px;color:#a8a8a8">Type</div>
  <svg class="a" style="left:1163px;top:367px" width="5" height="10"><path d="M0 3.5L2.5 0L5 3.5zM0 6.5H5L2.5 10z" fill="#a8a8a8"/></svg>
  <svg class="a" style="left:1202px;top:366px" width="14" height="12" viewBox="0 0 14 12"><rect x="0.5" y="0.5" width="13" height="11" fill="none" stroke="#a0a0a0"/><path d="M2 10L5 6L7 8L9 5L12 10z" fill="#a0a0a0"/><circle cx="10" cy="3.5" r="1.2" fill="#a0a0a0"/></svg>
  <svg class="a" style="left:1227px;top:366px" width="12" height="12" viewBox="0 0 12 12"><circle cx="6" cy="6" r="5.2" fill="none" stroke="#a0a0a0" stroke-width="1.4"/><path d="M9.7 2.3A5.2 5.2 0 0 1 2.3 9.7z" fill="#a0a0a0"/></svg>
  <div class="t" style="left:1251px;top:364px;font-family:'Liberation Serif';font-size:15px;line-height:15px;color:#a8a8a8">T</div>
  <svg class="a" style="left:1275px;top:366px" width="13" height="13" viewBox="0 0 13 13"><rect x="2" y="2" width="9" height="9" fill="none" stroke="#a0a0a0" stroke-width="1.2"/><rect x="0.5" y="0.5" width="3" height="3" fill="#a0a0a0"/><rect x="9.5" y="0.5" width="3" height="3" fill="#a0a0a0"/><rect x="0.5" y="9.5" width="3" height="3" fill="#a0a0a0"/><rect x="9.5" y="9.5" width="3" height="3" fill="#a0a0a0"/></svg>
  <svg class="a" style="left:1299px;top:365px" width="13" height="14" viewBox="0 0 13 14"><path d="M5 0.5H10L12.5 3V10H5z" fill="none" stroke="#a0a0a0" stroke-width="1.1"/><rect x="0.5" y="7" width="6" height="6.5" fill="#a0a0a0"/></svg>
  <div class="a" style="left:1343px;top:365px;width:9px;height:16px;background:#474747;border:1px solid #3d3d3d"></div>
  <div class="a" style="left:1344px;top:366px;width:7px;height:7px;background:#5e5e5e"></div>
  <div class="a" style="left:1053px;top:386px;width:303px;height:1px;background:#3c3c3c"></div>
  <div class="a" style="left:1053px;top:387px;width:303px;height:1px;background:#5c5c5c"></div>
  <div class="dd" style="left:1058px;top:391px;width:175px;height:19px;background:linear-gradient(#5e5e5e,#555)"></div>
  <div class="t" style="left:1065px;top:394px;font-size:11px;color:#eaeaea">Normal</div>
  <svg class="a" style="left:1222px;top:395px" width="6" height="11"><path d="M0 4L3 0L6 4zM0 7H6L3 11z" fill="#e0e0e0"/></svg>
  <div class="t" style="left:1239px;top:394px;font-size:11px;color:#bdbdbd">Opacité :</div>
  <div class="fld" style="left:1290px;top:392px;width:62px;height:19px;background:#3a3a3a;border-color:#444"></div>
  <div class="a" style="left:1332px;top:393px;width:19px;height:17px;background:#5c5c5c;border-radius:0 2px 2px 0"></div>
  <svg class="a" style="left:1338px;top:399px" width="7" height="4"><path d="M0 0H7L3.5 3.5z" fill="#e0e0e0"/></svg>
  <div class="t" style="left:1295px;top:395px;font-size:11px;color:#f0f0f0">100 %</div>
  <div class="a" style="left:1053px;top:414px;width:303px;height:1px;background:#3c3c3c"></div>
  <div class="a" style="left:1053px;top:415px;width:303px;height:1px;background:#5c5c5c"></div>
  <div class="t" style="left:1059px;top:421px;font-size:11px;color:#bdbdbd">Verrou :</div>
  <svg class="a" style="left:1109px;top:423px" width="11" height="11" viewBox="0 0 11 11"><rect width="11" height="11" fill="#6e6e6e"/><path d="M0 0h3.7v3.7H0zM7.3 0H11v3.7H7.3zM3.7 3.7h3.6v3.6H3.7zM0 7.3h3.7V11H0zM7.3 7.3H11V11H7.3z" fill="#8e8e8e"/></svg>
  <svg class="a" style="left:1129px;top:421px" width="16" height="15" viewBox="0 0 16 15"><path d="M15 1L8 8" stroke="#a8a8a8" stroke-width="2"/><path d="M1 14Q2 9 5 9Q8 9 7 11Q5 14 1 14z" fill="#a8a8a8"/></svg>
  <svg class="a" style="left:1151px;top:421px" width="14" height="15" viewBox="0 0 14 15"><path d="M7 1V14M1 7.5H13" stroke="#b0b0b0" stroke-width="1.2"/><path d="M7 0L4.5 3H9.5zM7 15L4.5 12H9.5zM0 7.5L3 5V10zM14 7.5L11 5V10z" fill="#b0b0b0"/><rect x="4.5" y="5" width="5" height="5" fill="none" stroke="#b0b0b0"/></svg>
  <svg class="a" style="left:1175px;top:421px" width="11" height="14" viewBox="0 0 11 14"><path d="M2.5 6V4Q2.5 1 5.5 1Q8.5 1 8.5 4V6" stroke="#a8a8a8" stroke-width="1.5" fill="none"/><rect x="0.5" y="6" width="10" height="7.5" fill="#a8a8a8"/><rect x="5" y="8.5" width="1" height="2.5" fill="#555"/></svg>
  <div class="t" style="left:1252px;top:421px;font-size:11px;color:#bdbdbd">Fond :</div>
  <div class="fld" style="left:1290px;top:420px;width:62px;height:19px;background:#434343;border-color:#484848"></div>
  <div class="a" style="left:1332px;top:421px;width:19px;height:17px;background:#5c5c5c;border-radius:0 2px 2px 0"></div>
  <svg class="a" style="left:1338px;top:427px" width="7" height="4"><path d="M0 0H7L3.5 3.5z" fill="#e0e0e0"/></svg>
  <div class="t" style="left:1295px;top:423px;font-size:11px;color:#787878">100 %</div>
  <!-- layers list -->
  <div class="a" style="left:1053px;top:443px;width:303px;height:1px;background:#3c3c3c"></div>
  <div class="a" style="left:1053px;top:444px;width:303px;height:263px;background:#494949"></div>
  <div class="a" style="left:1341px;top:444px;width:15px;height:263px;background:linear-gradient(90deg,#3f3f3f,#474747)"></div>
  <!-- rows -->
  <div class="a" style="left:1053px;top:445px;width:288px;height:38px;background:#535353;border-bottom:1px solid #3c3c3c"></div>
  <div class="a" style="left:1084px;top:445px;width:257px;height:38px;background:#6d7e95;border-bottom:1px solid #3c3c3c"></div>
  <div class="a" style="left:1053px;top:484px;width:288px;height:39px;background:#535353;border-bottom:1px solid #3c3c3c"></div>
  <div class="a" style="left:1053px;top:523px;width:288px;height:39px;background:#535353;border-bottom:1px solid #3c3c3c"></div>
  <div class="a" style="left:1053px;top:562px;width:288px;height:39px;background:#535353;border-bottom:1px solid #3c3c3c"></div>
  <div class="a" style="left:1053px;top:601px;width:288px;height:33px;background:#535353;border-bottom:1px solid #3c3c3c"></div>
  <div class="a" style="left:1083px;top:445px;width:1px;height:189px;background:#3c3c3c"></div>
  <svg class="a" style="left:1062px;top:458px" width="13" height="10" viewBox="0 0 13 10"><path d="M0.3 5Q2 0.6 6.5 0.6Q11 0.6 12.7 5Q11 9.4 6.5 9.4Q2 9.4 0.3 5z" fill="#d4d4d4"/><circle cx="6.5" cy="5" r="3" fill="#3a3a3a"/><circle cx="7.3" cy="4" r="1" fill="#e0e0e0"/></svg>
  <svg class="a" style="left:1062px;top:498px" width="13" height="10" viewBox="0 0 13 10"><path d="M0.3 5Q2 0.6 6.5 0.6Q11 0.6 12.7 5Q11 9.4 6.5 9.4Q2 9.4 0.3 5z" fill="#d4d4d4"/><circle cx="6.5" cy="5" r="3" fill="#3a3a3a"/><circle cx="7.3" cy="4" r="1" fill="#e0e0e0"/></svg>
  <svg class="a" style="left:1062px;top:537px" width="13" height="10" viewBox="0 0 13 10"><path d="M0.3 5Q2 0.6 6.5 0.6Q11 0.6 12.7 5Q11 9.4 6.5 9.4Q2 9.4 0.3 5z" fill="#d4d4d4"/><circle cx="6.5" cy="5" r="3" fill="#3a3a3a"/><circle cx="7.3" cy="4" r="1" fill="#e0e0e0"/></svg>
  <svg class="a" style="left:1062px;top:576px" width="13" height="10" viewBox="0 0 13 10"><path d="M0.3 5Q2 0.6 6.5 0.6Q11 0.6 12.7 5Q11 9.4 6.5 9.4Q2 9.4 0.3 5z" fill="#d4d4d4"/><circle cx="6.5" cy="5" r="3" fill="#3a3a3a"/><circle cx="7.3" cy="4" r="1" fill="#e0e0e0"/></svg>
  <svg class="a" style="left:1062px;top:611px" width="13" height="10" viewBox="0 0 13 10"><path d="M0.3 5Q2 0.6 6.5 0.6Q11 0.6 12.7 5Q11 9.4 6.5 9.4Q2 9.4 0.3 5z" fill="#d4d4d4"/><circle cx="6.5" cy="5" r="3" fill="#3a3a3a"/><circle cx="7.3" cy="4" r="1" fill="#e0e0e0"/></svg>
  <svg class="a" style="left:1084px;top:445px" width="37" height="38" viewBox="0 0 37 38"><path d="M1 9V1H9M28 1H36V9M36 29V37H28M9 37H1V29" stroke="#f0f0f0" stroke-width="1.2" fill="none"/></svg>
  <svg class="a" style="left:1094px;top:455px" width="17" height="17" viewBox="0 0 17 17"><path d="M1 1H16V5.5H14.8L14 3H10V14.5L12 15V16H5V15L7 14.5V3H3L2.2 5.5H1z" fill="#d8d8d8"/></svg>
  <div class="t" style="left:1129px;top:458px;font-size:11px;color:#f4f4f4">Calque 4</div>
  <svg class="a" style="left:1095px;top:494px" width="15" height="18" viewBox="0 0 15 18"><path d="M3 1.5L11 0.3V2.5H10L9.6 1.6L8 1.9V9L9.2 9.5V10H5.2V9.5L6.4 9V2.1L4.8 2.4L4.2 3.6H3z" fill="#d4d4d4"/><path d="M1 17.5Q2 12 7.5 12Q13 12 14 17.5" stroke="#d4d4d4" stroke-width="1.5" fill="none"/></svg>
  <div class="t" style="left:1129px;top:497px;font-size:11px;color:#f0f0f0">Calque 3</div>
  <svg class="a" style="left:1095px;top:533px" width="15" height="18" viewBox="0 0 15 18"><path d="M3 1.5L11 0.3V2.5H10L9.6 1.6L8 1.9V9L9.2 9.5V10H5.2V9.5L6.4 9V2.1L4.8 2.4L4.2 3.6H3z" fill="#d4d4d4"/><path d="M1 17.5Q2 12 7.5 12Q13 12 14 17.5" stroke="#d4d4d4" stroke-width="1.5" fill="none"/></svg>
  <div class="t" style="left:1129px;top:536px;font-size:11px;color:#f0f0f0">Test</div>
  <svg class="a" style="left:1094px;top:572px" width="17" height="17" viewBox="0 0 17 17"><path d="M1 1H16V5.5H14.8L14 3H10V14.5L12 15V16H5V15L7 14.5V3H3L2.2 5.5H1z" fill="#d8d8d8"/></svg>
  <div class="t" style="left:1129px;top:575px;font-size:11px;color:#f0f0f0">Test</div>
  <div class="a" style="left:1087px;top:604px;width:32px;height:25px;background:#fff;border:1px solid #2a2a2a"></div>
  <div class="a" style="left:1096px;top:607px;width:14px;height:17px;background:#b6dadd"></div>
  <div class="a" style="left:1101px;top:611px;width:5px;height:7px;background:#e8f0f0;border-radius:2px"></div>
  <div class="t" style="left:1129px;top:609px;font-size:11px;font-style:italic;color:#f0f0f0">Arrière-plan</div>
  <svg class="a" style="left:1314px;top:610px" width="10" height="13" viewBox="0 0 10 13"><path d="M2 6V4Q2 1 5 1Q8 1 8 4V6" stroke="#c8c8c8" stroke-width="1.4" fill="none"/><rect x="0.5" y="6" width="9" height="6.5" fill="none" stroke="#c8c8c8" stroke-width="1.2"/><rect x="4.3" y="8" width="1.4" height="2.5" fill="#c8c8c8"/></svg>
  <!-- bottom bar -->
  <div class="a" style="left:1053px;top:707px;width:303px;height:1px;background:#2e2e2e"></div>
  <div class="a" style="left:1053px;top:708px;width:303px;height:18px;background:#535353;border-top:1px solid #5e5e5e"></div>
  <svg class="a" style="left:1153px;top:713px" width="14" height="9" viewBox="0 0 14 9"><path d="M6 1.2H3.5A3.3 3.3 0 0 0 3.5 7.8H6M8 1.2H10.5A3.3 3.3 0 0 1 10.5 7.8H8M4.5 4.5H9.5" stroke="#b4b4b4" stroke-width="1.8" fill="none"/></svg>
  <div class="t" style="left:1182px;top:710px;font-family:'Liberation Sans';font-style:italic;font-size:13px;line-height:15px;color:#a8a8a8;letter-spacing:-1px">fx</div>
  <svg class="a" style="left:1207px;top:712px" width="14" height="11" viewBox="0 0 14 11"><rect width="14" height="11" fill="#b0b0b0"/><circle cx="7" cy="5.5" r="3" fill="#555"/></svg>
  <svg class="a" style="left:1235px;top:712px" width="12" height="12" viewBox="0 0 12 12"><circle cx="6" cy="6" r="5.2" fill="none" stroke="#b0b0b0" stroke-width="1.4"/><path d="M9.7 2.3A5.2 5.2 0 0 1 2.3 9.7z" fill="#b0b0b0"/></svg>
  <svg class="a" style="left:1262px;top:712px" width="13" height="11" viewBox="0 0 13 11"><path d="M0 1H5L6 2.5H13V11H0z" fill="#b0b0b0"/></svg>
  <svg class="a" style="left:1289px;top:712px" width="11" height="12" viewBox="0 0 11 12"><path d="M0 0H11V11H4V7H0z" fill="#b0b0b0"/><path d="M0.5 7.5L3.5 10.5" stroke="#b0b0b0" stroke-width="1.2"/></svg>
  <svg class="a" style="left:1316px;top:711px" width="12" height="13" viewBox="0 0 12 13"><path d="M0.5 3H11.5" stroke="#a8a8a8" stroke-width="1.6"/><path d="M4 2.2V0.8H8V2.2" stroke="#a8a8a8" stroke-width="1.2" fill="none"/><path d="M2 4.5V12.5H10V4.5" stroke="#a8a8a8" stroke-width="1.2" fill="none"/><path d="M4.2 5V11M6 5V11M7.8 5V11" stroke="#a8a8a8" stroke-width="1"/></svg>
  <svg class="a" style="left:992px;top:39px" width="17" height="17" viewBox="0 0 17 17"><circle cx="8.5" cy="8.5" r="6.7" stroke="#c8c8c8" stroke-width="2" fill="none"/><path d="M4 4L13 13" stroke="#c8c8c8" stroke-width="2"/></svg>
  <svg class="a" style="left:1025px;top:40px" width="17" height="15" viewBox="0 0 17 15"><path d="M1.5 7.5L6 12.5L15.5 2" stroke="#d0d0d0" stroke-width="3" fill="none"/></svg>
  <div class="sep" style="left:1053px;top:37px;height:23px"></div>
  <div class="t" style="left:1065px;top:40px;font-size:14px;line-height:15px;font-weight:bold;color:#c8c8c8;transform:scaleX(0.85);transform-origin:0 0">3D</div>
  <div class="dd" style="left:1164px;top:40px;width:186px;height:20px;background:linear-gradient(#5c5c5c,#545454)"></div>
  <div class="t" style="left:1172px;top:43px;font-size:11px;color:#b4b4b4">Les indispensables</div>
  <svg class="a" style="left:1339px;top:45px" width="6" height="11"><path d="M0 4L3 0L6 4zM0 7H6L3 11z" fill="#a0a0a0"/></svg>
</div>
</body></html>
